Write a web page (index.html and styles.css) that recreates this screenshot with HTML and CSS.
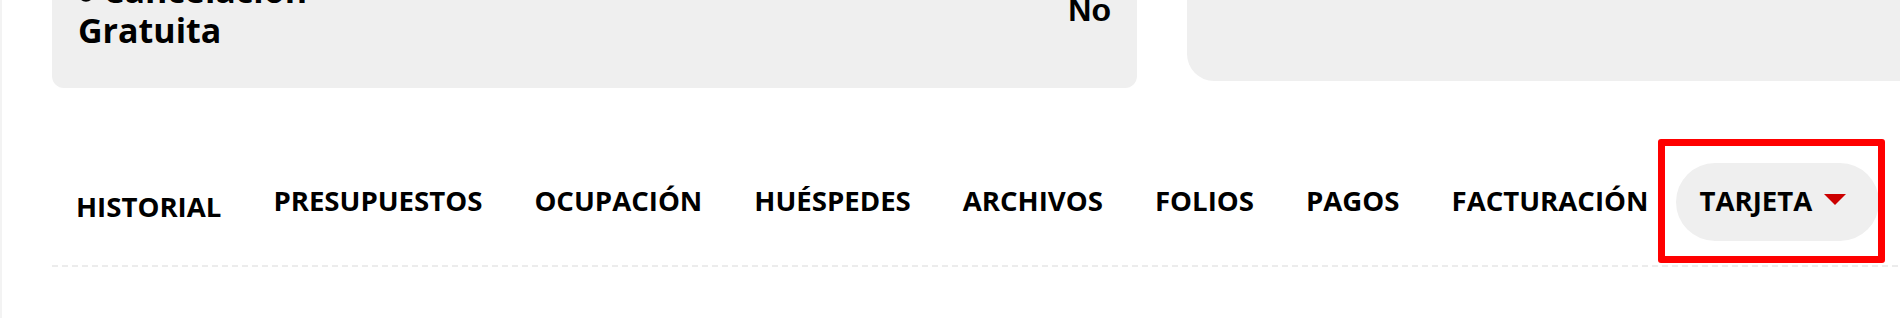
FILE: index.html
```html
<!DOCTYPE html>
<html lang="es">

<head>
    <meta charset="UTF-8">
    <meta name="viewport" content="width=device-width, initial-scale=1.0">
    <title>Reserva</title>
    <link rel="stylesheet" href="styles.css">
</head>

<body>
    <div class="page">
        <!-- tarjetas de resumen (cortadas por arriba) -->
        <div class="cards">
            <div class="card">
                <div class="card-label">
                    <span class="line"><svg class="card-icon" width="16" height="26" viewBox="0 0 16 26"><circle cx="8" cy="13" r="6" fill="none" stroke="#000" stroke-width="3.5"/></svg> Cancelación</span>
                    <span class="line">Gratuita</span>
                </div>
                <div class="card-value">No</div>
            </div>
            <div class="card card-side"></div>
        </div>

        <!-- pestañas -->
        <ul class="tabs">
            <li class="tab tab-low">HISTORIAL</li>
            <li class="tab">PRESUPUESTOS</li>
            <li class="tab">OCUPACIÓN</li>
            <li class="tab">HUÉSPEDES</li>
            <li class="tab">ARCHIVOS</li>
            <li class="tab">FOLIOS</li>
            <li class="tab">PAGOS</li>
            <li class="tab">FACTURACIÓN</li>
            <li class="tab active">
                TARJETA
                <svg class="caret" width="22" height="11" viewBox="0 0 22 11"><polygon points="0,0 22,0 11,11" fill="#cc0000"/></svg>
                <span class="mark"></span>
            </li>
        </ul>
    </div>
</body>

</html>
```

FILE: styles.css
```css
* {
    margin: 0;
    padding: 0;
    box-sizing: border-box;
}

ul {
    list-style: none;
}

body {
    background: #fff;
    color: #000;
    font-family: "Open Sans", "Liberation Sans", sans-serif;
    font-weight: 700;
    overflow: hidden;
}

.page {
    display: flow-root;
    border-left: 2px solid #f3f3f3;
    padding-left: 50px;
    min-height: 318px;
}

/* tarjetas */
.cards {
    display: flex;
    align-items: flex-start;
    gap: 50px;
    margin-top: -54px;
}

.card {
    flex: 0 0 1085px;
    background: #efefef;
    border-radius: 12px;
    display: flex;
    align-items: center;
    justify-content: space-between;
    padding: 24px 26px 38px 26px;
}

.card-side {
    height: 135px;
    border-radius: 0 0 0 27px;
}

.card-label {
    font-size: 34px;
    line-height: 40px;
}

.card-label .line {
    display: block;
}

.card-icon {
    vertical-align: -4px;
}

.card-value {
    font-family: "Liberation Sans", Arial, sans-serif;
    font-size: 32px;
}

/* pestañas */
.tabs {
    display: flex;
    align-items: center;
    gap: 4px;
    margin-top: 75px;
    padding-bottom: 26px;
    background: repeating-linear-gradient(to right, #ececec 0 6px, transparent 6px 10px) left bottom / 100% 2px no-repeat;
}

.tab {
    font-size: 27.6px;
    padding: 18px 24px 22px;
    white-space: nowrap;
    cursor: pointer;
}

.tab-low {
    padding-top: 24px;
    padding-bottom: 16px;
}

.tab.active {
    position: relative;
    display: flex;
    align-items: center;
    gap: 12px;
    padding: 18px 33px 22px 23px;
    background: #efefef;
    border-radius: 39px;
}

.caret {
    display: block;
    margin-top: -2px;
}

/* recuadro rojo de anotación */
.mark {
    position: absolute;
    left: -18px;
    top: -24px;
    right: -6px;
    bottom: -22px;
    border: 7px solid #ff0000;
    border-radius: 3px;
}
```
